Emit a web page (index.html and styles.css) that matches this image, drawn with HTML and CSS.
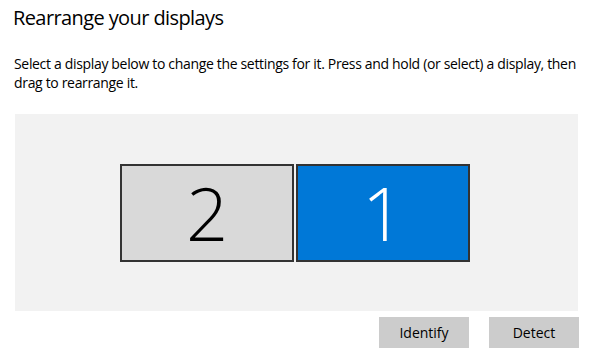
FILE: index.html
```html
<!DOCTYPE html>
<html lang="en">
<head>
  <meta charset="UTF-8" />
  <title>Rearrange your displays</title>
  <link rel="stylesheet" href="styles.css">
</head>
<body>
  <div class="page">
    <h1>Rearrange your displays</h1>
    <p class="intro">Select a display below to change the settings for it. Press and hold (or select) a display, then drag to rearrange it.</p>

    <div class="arrange-panel">
      <div class="monitors">
        <div class="monitor">2</div>
        <div class="monitor selected">1</div>
      </div>
    </div>

    <div class="button-row">
      <button type="button" class="btn">Identify</button>
      <button type="button" class="btn">Detect</button>
    </div>
  </div>
</body>
</html>
```

FILE: styles.css
```css
body {
  margin: 0;
  font-family: 'Open Sans', 'Noto Sans', sans-serif;
  color: #000;
  background: #fff;
}

.page {
  width: 570px;
  padding: 0 0 0 14px;
}

h1 {
  margin: 0;
  padding-top: 4px;
  margin-left: -1px;
  font-size: 20px;
  font-weight: 400;
  line-height: 28px;
  letter-spacing: -0.6px;
}

.intro {
  margin: 22px 0 0;
  font-size: 14px;
  line-height: 19px;
  letter-spacing: -0.33px;
}

.arrange-panel {
  margin: 22px 0 0 1px;
  width: 563px;
  height: 197px;
  background-color: #f2f2f2;
  display: flex;
  justify-content: center;
  align-items: center;
}

.monitors {
  display: flex;
  gap: 2px;
  margin-left: -3px;
}

.monitor {
  box-sizing: border-box;
  width: 174px;
  height: 98px;
  border: 2px solid #333;
  background-color: #d9d9d9;
  display: flex;
  justify-content: center;
  align-items: center;
  font-size: 74px;
  font-weight: 300;
  line-height: 1;
}

.monitor.selected {
  background-color: #0078d7;
  color: #fff;
}

.button-row {
  display: flex;
  justify-content: flex-end;
  gap: 20px;
  margin-top: 6px;
  width: 565px;
}

.btn {
  width: 90px;
  height: 31px;
  border: none;
  background-color: #ccc;
  font-family: inherit;
  font-size: 14px;
  color: #000;
  padding: 0;
}
```
